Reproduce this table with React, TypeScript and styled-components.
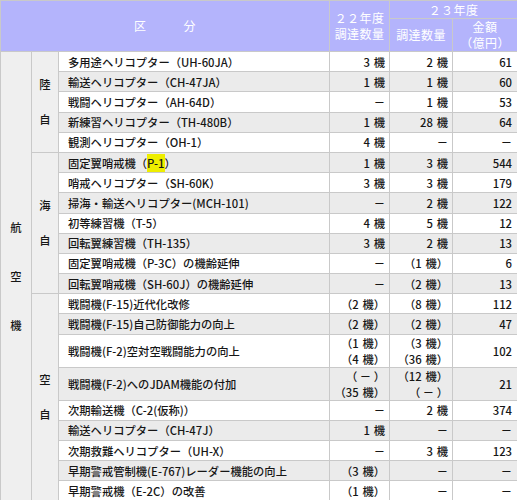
import React from "react";
import styled, { createGlobalStyle, css } from "styled-components";

const Global = createGlobalStyle`
  html, body { margin: 0; padding: 0; background: #ffffff; }
  body { font-family: "Noto Sans CJK JP", "Noto Sans", sans-serif; }
`;

const BORDER = "#c9c9c9";

const Table = styled.table`
  width: 517px;
  table-layout: fixed;
  border-collapse: collapse;
  font-family: "Noto Sans CJK JP", "Noto Sans", sans-serif;
  font-size: 11.3px;
  font-weight: 500;
  color: #161616;
`;

const HeadRow = styled.tr<{ $h: number }>`
  height: ${(p) => p.$h}px;
`;

const HeadCell = styled.th`
  background: #b4b4fc;
  color: #ffffff;
  font-weight: normal;
  font-size: 12px;
  letter-spacing: 0.4px;
  border: 1px solid ${BORDER};
  padding: 0;
  text-align: center;
  vertical-align: middle;
  line-height: 16px;
`;

const Row = styled.tr<{ $shade: boolean; $double?: boolean }>`
  height: ${(p) => (p.$double ? "32px" : "20.2px")};
  background: ${(p) => (p.$shade ? "#ebebeb" : "#ffffff")};
`;

const cellBase = css`
  border: 1px solid ${BORDER};
  padding: 0;
  vertical-align: middle;
  white-space: nowrap;
`;

const GroupCell = styled.td`
  ${cellBase};
  background: #efefef;
  text-align: center;
`;

const VerticalLabel = styled.div<{ $step: number }>`
  display: flex;
  flex-direction: column;
  align-items: center;
  line-height: ${(p) => p.$step}px;
`;

const NameCell = styled.td`
  ${cellBase};
  padding-left: 9px;
  line-height: 16px;
`;

const NumCell = styled.td<{ $pr: number }>`
  ${cellBase};
  text-align: right;
  padding-right: ${(p) => p.$pr}px;
  line-height: 16px;
`;

const Highlight = styled.span`
  background: #eeee00;
  padding: 1px 0;
`;

type Item = {
  name: React.ReactNode;
  a: React.ReactNode;
  b: React.ReactNode;
  c: string;
  double?: boolean;
};

const k = (n: string) => `${n}\u2004機`;
const pk = (n: string) => `（${n}\u2004機）`;
const DASH = "－";
const PDASH = "（ － ）";

const land: Item[] = [
  { name: "多用途ヘリコプター（UH-60JA）", a: k("3"), b: k("2"), c: "61" },
  { name: "輸送ヘリコプター（CH-47JA）", a: k("1"), b: k("1"), c: "60" },
  { name: "戦闘ヘリコプター（AH-64D）", a: DASH, b: k("1"), c: "53" },
  { name: "新練習ヘリコプター（TH-480B）", a: k("1"), b: k("28"), c: "64" },
  { name: "観測ヘリコプター（OH-1）", a: k("4"), b: DASH, c: DASH },
];

const sea: Item[] = [
  {
    name: (
      <>
        固定翼哨戒機（<Highlight>P-1</Highlight>）
      </>
    ),
    a: k("1"),
    b: k("3"),
    c: "544",
  },
  { name: "哨戒ヘリコプター（SH-60K）", a: k("3"), b: k("3"), c: "179" },
  { name: "掃海・輸送ヘリコプター(MCH-101)", a: DASH, b: k("2"), c: "122" },
  { name: "初等練習機（T-5）", a: k("4"), b: k("5"), c: "12" },
  { name: "回転翼練習機（TH-135）", a: k("3"), b: k("2"), c: "13" },
  { name: "固定翼哨戒機（P-3C）の機齢延伸", a: DASH, b: pk("1"), c: "6" },
  { name: "回転翼哨戒機（SH-60J）の機齢延伸", a: DASH, b: pk("2"), c: "13" },
];

const air: Item[] = [
  { name: "戦闘機(F-15)近代化改修", a: pk("2"), b: pk("8"), c: "112" },
  { name: "戦闘機(F-15)自己防御能力の向上", a: pk("2"), b: pk("2"), c: "47" },
  {
    name: "戦闘機(F-2)空対空戦闘能力の向上",
    a: (
      <>
        {pk("1")}
        <br />
        {pk("4")}
      </>
    ),
    b: (
      <>
        {pk("3")}
        <br />
        {pk("36")}
      </>
    ),
    c: "102",
    double: true,
  },
  {
    name: "戦闘機(F-2)へのJDAM機能の付加",
    a: (
      <>
        {PDASH}
        <br />
        {pk("35")}
      </>
    ),
    b: (
      <>
        {pk("12")}
        <br />
        {PDASH}
      </>
    ),
    c: "21",
    double: true,
  },
  { name: "次期輸送機（C-2(仮称)）", a: DASH, b: k("2"), c: "374" },
  { name: "輸送ヘリコプター（CH-47J）", a: k("1"), b: DASH, c: DASH },
  { name: "次期救難ヘリコプター（UH-X）", a: DASH, b: k("3"), c: "123" },
  { name: "早期警戒管制機(E-767)レーダー機能の向上", a: pk("3"), b: DASH, c: DASH },
  { name: "早期警戒機（E-2C）の改善", a: pk("1"), b: DASH, c: DASH },
];

const groups: { label: [string, string]; items: Item[] }[] = [
  { label: ["陸", "自"], items: land },
  { label: ["海", "自"], items: sea },
  { label: ["空", "自"], items: air },
];

const total = land.length + sea.length + air.length;

export default function App() {
  let index = 0;
  return (
    <>
      <Global />
      <Table>
        <colgroup>
          <col style={{ width: 31 }} />
          <col style={{ width: 27 }} />
          <col style={{ width: 271 }} />
          <col style={{ width: 60 }} />
          <col style={{ width: 63 }} />
          <col style={{ width: 65 }} />
        </colgroup>
        <thead>
          <HeadRow $h={18}>
            <HeadCell colSpan={3} rowSpan={2}>
              区　　　分
            </HeadCell>
            <HeadCell rowSpan={2}>
              ２２年度
              <br />
              調達数量
            </HeadCell>
            <HeadCell colSpan={2}>２３年度</HeadCell>
          </HeadRow>
          <HeadRow $h={32}>
            <HeadCell>調達数量</HeadCell>
            <HeadCell>
              金額
              <br />
              （億円）
            </HeadCell>
          </HeadRow>
        </thead>
        <tbody>
          {groups.map((g, gi) =>
            g.items.map((it, i) => {
              const shade = index % 2 === 1;
              const first = index === 0;
              index += 1;
              return (
                <Row key={`${gi}-${i}`} $shade={shade} $double={it.double}>
                  {first && (
                    <GroupCell rowSpan={total}>
                      <VerticalLabel $step={49}>
                        <span>航</span>
                        <span>空</span>
                        <span>機</span>
                      </VerticalLabel>
                    </GroupCell>
                  )}
                  {i === 0 && (
                    <GroupCell rowSpan={g.items.length}>
                      <VerticalLabel $step={35}>
                        <span>{g.label[0]}</span>
                        <span>{g.label[1]}</span>
                      </VerticalLabel>
                    </GroupCell>
                  )}
                  <NameCell>{it.name}</NameCell>
                  <NumCell $pr={4}>{it.a}</NumCell>
                  <NumCell $pr={4}>{it.b}</NumCell>
                  <NumCell $pr={5}>{it.c}</NumCell>
                </Row>
              );
            })
          )}
        </tbody>
      </Table>
    </>
  );
}
